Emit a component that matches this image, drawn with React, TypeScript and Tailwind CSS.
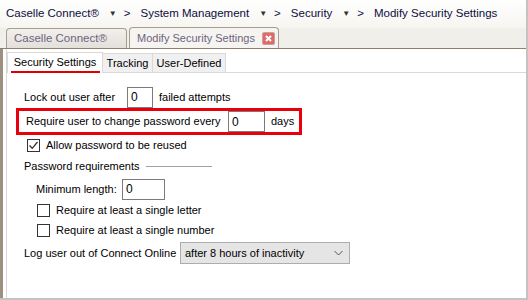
import React from "react";

const Caret = () => <span className="ml-[10px] mr-[7px] text-[8px] text-[#333]">▼</span>;

const Box = ({ w, value }: { w: string; value: string }) => (
  <div className={`${w} h-[21px] border border-[#7a7a7a] bg-white px-[3px] flex items-center text-[12px] leading-none shrink-0`}>
    {value}
  </div>
);

const Check = ({ checked }: { checked?: boolean }) => (
  <div className="w-[13px] h-[13px] border border-[#333] bg-white flex items-center justify-center shrink-0">
    {checked && (
      <svg width="11" height="11" viewBox="0 0 11 11">
        <path d="M1.5 5.5 L4.2 8.3 L9.5 2" fill="none" stroke="#333" strokeWidth="1.3" />
      </svg>
    )}
  </div>
);

const App = () => {
  return (
    <div
      className="w-[528px] h-[300px] bg-white border-r-2 border-b-2 border-[#c3c3c3] flex flex-col overflow-hidden text-[#000] text-[11px] whitespace-nowrap"
      style={{ fontFamily: '"Liberation Sans", Arial, sans-serif' }}
    >
      {/* breadcrumb */}
      <div className="h-[28px] flex items-center pl-[6px] text-[11.5px] text-[#0d0d40] bg-gradient-to-b from-white to-[#f6f5f0]">
        <span>Caselle Connect®</span>
        <Caret />
        <span>&gt;</span>
        <span className="ml-[10px]">System Management</span>
        <Caret />
        <span>&gt;</span>
        <span className="ml-[10px]">Security</span>
        <Caret />
        <span>&gt;</span>
        <span className="ml-[10px]">Modify Security Settings</span>
      </div>

      {/* document tabs */}
      <div className="h-[21px] bg-[#f0efea] flex items-end pl-[6px] gap-[2px] border-b border-[#8e8070]">
        <div className="w-[121px] h-[20px] rounded-t-[4px] border border-b-0 border-[#a79c8e] bg-gradient-to-b from-[#f2f0ec] to-[#e3e0da] text-[#6e6380] text-[11.5px] pl-[7px] flex items-center">
          Caselle Connect®
        </div>
        <div className="w-[150px] h-[21px] rounded-t-[4px] border border-b-0 border-[#a79c8e] bg-[#f5f4f1] text-[#6e6380] text-[11px] pl-[7px] flex items-center justify-between pr-[3px]">
          <span>Modify Security Settings</span>
          <span className="w-[13px] h-[13px] rounded-[2px] bg-[#e06a6a] border border-[#c8a0a0] flex items-center justify-center">
            <svg width="9" height="9" viewBox="0 0 9 9">
              <path d="M2 2 L7 7 M7 2 L2 7" stroke="white" strokeWidth="2" />
            </svg>
          </span>
        </div>
      </div>

      {/* body */}
      <div className="flex-1 flex border-l-[3px] border-[#9c9080]">
        <div className="flex-1 ml-[3px] border-l border-[#d8d8d8] flex flex-col">
          {/* inner tabs */}
          <div className="h-[24px] flex items-end border-b border-[#d9d9d9] pt-[3px]">
            <div className="w-[96px] h-[21px] border border-b-0 border-[#d9d9d9] bg-white flex flex-col items-center justify-center -mb-px">
              <span className="leading-none mt-[3px]">Security Settings</span>
              <span className="w-[89px] h-[2px] bg-[#e00000] mt-[3px]" />
            </div>
            <div className="w-[50px] h-[19px] border border-l-0 border-b-0 border-[#d9d9d9] bg-[#f0f0f0] flex items-center justify-center pt-[1px]">
              Tracking
            </div>
            <div className="w-[73px] h-[19px] border border-l-0 border-b-0 border-[#d9d9d9] bg-[#f0f0f0] flex items-center justify-center pt-[1px]">
              User-Defined
            </div>
          </div>

          {/* settings */}
          <div className="flex flex-col pl-[9px] pt-[13px]">
            <div className="flex items-center pl-[8px] h-[22px]">
              <span className="w-[103px]">Lock out user after</span>
              <Box w="w-[26px]" value="0" />
              <span className="ml-[6px]">failed attempts</span>
            </div>
            <div className="flex items-center w-[286px] h-[27px] border-[3px] border-[#e8000b] pl-[7px]">
              <span className="w-[202px]">Require user to change password every</span>
              <Box w="w-[37px]" value="0" />
              <span className="ml-[6px]">days</span>
            </div>
            <div className="flex items-center gap-[6px] pl-[11px] h-[18px] mt-[1px]">
              <Check checked />
              <span>Allow password to be reused</span>
            </div>
            <div className="flex items-center pl-[8px] h-[18px] mt-[3px]">
              <span>Password requirements</span>
              <span className="ml-[6px] w-[66px] h-px bg-[#a0a0a0]" />
            </div>
            <div className="flex items-center pl-[20px] h-[22px] mt-[3px]">
              <span className="w-[86px]">Minimum length:</span>
              <Box w="w-[43px]" value="0" />
            </div>
            <div className="flex items-center gap-[6px] pl-[21px] h-[20px]">
              <Check />
              <span>Require at least a single letter</span>
            </div>
            <div className="flex items-center gap-[6px] pl-[21px] h-[20px]">
              <Check />
              <span>Require at least a single number</span>
            </div>
            <div className="flex items-center pl-[8px] h-[22px] mt-[2px]">
              <span className="w-[156px]">Log user out of Connect Online</span>
              <div className="w-[170px] h-[22px] border border-[#adadad] bg-[#e5e5e5] flex items-center justify-between pl-[4px] pr-[6px]">
                <span>after 8 hours of inactivity</span>
                <svg width="9" height="6" viewBox="0 0 9 6">
                  <path d="M0.5 1 L4.5 5 L8.5 1" fill="none" stroke="#555" strokeWidth="1" />
                </svg>
              </div>
            </div>
          </div>
        </div>
      </div>
    </div>
  );
};

export default App;
